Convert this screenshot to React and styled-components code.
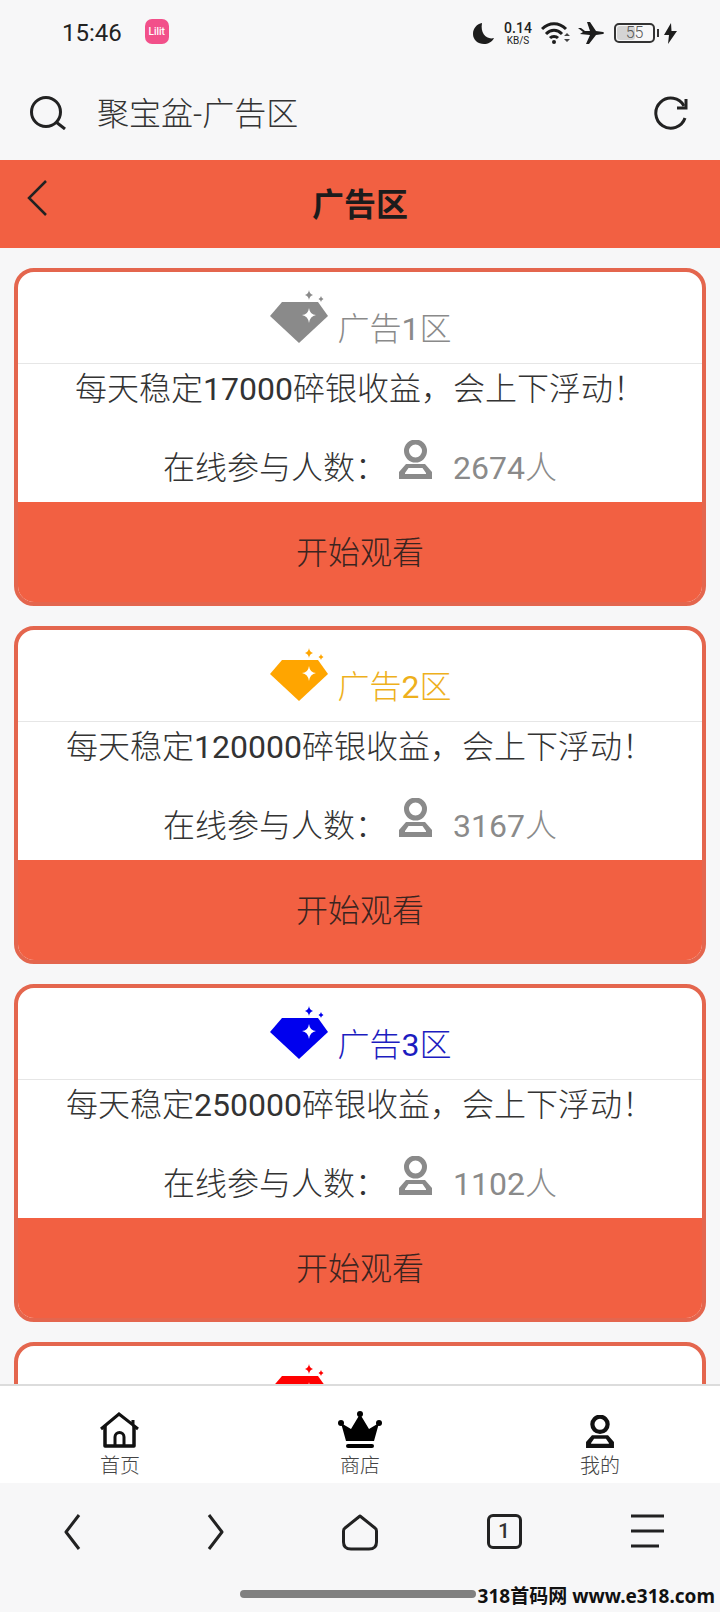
import React from "react";
import styled, { createGlobalStyle } from "styled-components";

const GlobalStyle = createGlobalStyle`
  html, body {
    margin: 0;
    padding: 0;
    background: #f7f7f8;
  }
  * {
    box-sizing: border-box;
  }
`;

const FONT = `Roboto, "Noto Sans CJK SC", sans-serif`;
const ORANGE = "#f26042";

// full-width punctuation, as the page uses it
const DESC_TAIL = "碎银收益\uFF0C会上下浮动\uFF01";
const ONLINE_LABEL = "在线参与人数\uFF1A";

const zones = [
  { id: 1, no: "1", color: "#8a8a8a", gem: "#8a8a8a", amount: "17000", count: "2674" },
  { id: 2, no: "2", color: "#eeb01c", gem: "#ffa500", amount: "120000", count: "3167" },
  { id: 3, no: "3", color: "#1c1cc0", gem: "#0000ee", amount: "250000", count: "1102" },
  // the fourth card is cut off by the tab bar, only its gem shows
  { id: 4, gem: "#ff0000" },
];

const Screen = styled.div`
  position: relative;
  width: 720px;
  height: 1612px;
  display: flex;
  flex-direction: column;
  overflow: hidden;
  background: #f7f7f8;
  font-family: ${FONT};
  font-weight: 300;
  color: #2b2b2b;
`;

const StatusBar = styled.div`
  height: 66px;
  flex: none;
  display: flex;
  align-items: center;
  padding: 0 43px 0 62px;
`;

const Clock = styled.span`
  font-size: 24px;
  font-weight: 400;
  color: #222;
`;

const AppBadge = styled.span`
  width: 24px;
  height: 25px;
  margin: 0 0 4px 23px;
  border-radius: 7px;
  background: #f2508a;
  color: #fff;
  font-size: 10px;
  font-weight: 500;
  line-height: 25px;
  text-align: center;
`;

const StatusIcons = styled.div`
  margin-left: auto;
  display: flex;
  align-items: center;
`;

const Speed = styled.div`
  width: 28px;
  margin: 0 9px 0 10px;
  display: flex;
  flex-direction: column;
  align-items: center;
  color: #222;
  font-size: 14px;
  font-weight: 500;
  line-height: 14px;
  span {
    font-size: 10px;
    line-height: 11px;
    font-weight: 400;
  }
`;

const PlaneSlot = styled.span`
  display: flex;
  margin-left: 7px;
`;

const Battery = styled.div`
  position: relative;
  width: 41px;
  height: 20px;
  margin: 0 9px;
  border: 2px solid #333;
  border-radius: 5px;
  font-size: 16px;
  line-height: 16px;
  color: #555;
  text-align: center;
  &::before {
    content: "";
    position: absolute;
    left: 1px;
    top: 1px;
    bottom: 1px;
    width: 18px;
    border-radius: 3px;
    background: #d4d4d4;
  }
  &::after {
    content: "";
    position: absolute;
    right: -6px;
    top: 4px;
    width: 2px;
    height: 8px;
    background: #333;
  }
  span {
    position: relative;
  }
`;

const AddressBar = styled.div`
  height: 94px;
  flex: none;
  display: flex;
  align-items: center;
  padding: 0 32px 0 30px;
`;

const AddressText = styled.div`
  margin: 0 0 4px 30px;
  flex: 1;
  font-size: 32px;
  color: #333;
`;

const Header = styled.div`
  position: relative;
  height: 88px;
  flex: none;
  background: ${ORANGE};
  display: flex;
  align-items: center;
  justify-content: center;
`;

const BackIcon = styled.svg`
  position: absolute;
  left: 27px;
  top: 20px;
`;

const Title = styled.h1`
  margin: 0 0 4px;
  font-size: 32px;
  font-weight: 700;
  color: #1c1c1c;
`;

const Main = styled.main`
  flex: 1;
  min-height: 0;
  overflow: hidden;
  padding: 20px 14px 0;
  display: flex;
  flex-direction: column;
  gap: 20px;
`;

const Card = styled.section`
  flex: none;
  height: 338px;
  border: 4px solid #e4664e;
  border-radius: 20px;
  background: #fff;
  overflow: hidden;
  display: flex;
  flex-direction: column;
`;

const CardHead = styled.div`
  height: 92px;
  flex: none;
  padding-bottom: 17px;
  display: flex;
  align-items: flex-end;
  justify-content: center;
  gap: 8px;
  border-bottom: 1px solid #e6e6e6;
`;

const CardName = styled.span`
  width: 113px;
  font-size: 32px;
  line-height: 34px;
  white-space: nowrap;
  color: ${(p) => p.$color};
`;

const Digits = styled.span`
  font-weight: 400;
`;

const Desc = styled.div`
  height: 46px;
  padding-top: 2px;
  font-size: 32px;
  line-height: 46px;
  text-align: center;
  white-space: nowrap;
  color: #333;
`;

const OnlineRow = styled.div`
  flex: 1;
  padding-bottom: 17px;
  display: flex;
  align-items: flex-end;
  justify-content: center;
  font-size: 32px;
  line-height: 34px;
  color: #333;
`;

const Count = styled.span`
  color: #8a8a8a;
  margin-left: 21px;
`;

const PersonWrap = styled.span`
  margin-left: 12px;
  display: flex;
  margin-bottom: 6px;
`;

const WatchButton = styled.div`
  height: 100px;
  flex: none;
  background: ${ORANGE};
  font-size: 32px;
  line-height: 102px;
  text-align: center;
  color: #3a2420;
`;

const TabBar = styled.nav`
  height: 99px;
  flex: none;
  background: #fff;
  border-top: 2px solid #dcdcdc;
  display: grid;
  grid-template-columns: repeat(3, 1fr);
`;

const Tab = styled.div`
  display: flex;
  flex-direction: column;
  align-items: center;
  padding-top: 25px;
  font-size: 20px;
  line-height: 28px;
  color: #444;
`;

const TabIcon = styled.span`
  height: 37px;
  margin-bottom: 4px;
  display: flex;
  align-items: flex-end;
`;

const BrowserBar = styled.div`
  height: 129px;
  flex: none;
  display: grid;
  grid-template-columns: repeat(5, 1fr);
  align-items: start;
  padding: 31px 0 0 0;
  justify-items: center;
`;

const TabCount = styled.div`
  width: 35px;
  height: 35px;
  border: 3px solid #222;
  border-radius: 6px;
  font-size: 21px;
  font-weight: 500;
  line-height: 29px;
  text-align: center;
  color: #333;
`;

const HomePill = styled.div`
  position: absolute;
  left: 240px;
  top: 1590px;
  width: 236px;
  height: 8px;
  border-radius: 4px;
  background: #808080;
`;

const Watermark = styled.div`
  position: absolute;
  right: 5px;
  top: 1584px;
  font-family: "Noto Sans", "Noto Sans CJK SC", sans-serif;
  font-size: 19px;
  line-height: 24px;
  font-weight: 700;
  color: #111;
  white-space: nowrap;
`;

function Gem({ color }) {
  return (
    <svg width="60" height="58" viewBox="0 0 60 58">
      <path d="M12 14H48L58 28L29 55L0 28Z" fill={color} />
      <path d="M39 20Q40 27 46 27Q40 28 39 35Q38 28 32 27Q38 27 39 20Z" fill="#fff" />
      <path d="M39 2Q39.500 6 43 7Q39.500 8 39 12Q38.500 8 35 7Q38.500 6 39 2Z" fill={color} />
      <path d="M51 8Q51.300 10 53.500 11Q51.300 12 51 14Q50.700 12 48.500 11Q50.700 10 51 8Z" fill={color} />
    </svg>
  );
}

function Person({ color = "#8a8a8a", width = 33, height = 39 }) {
  return (
    <svg width={width} height={height} viewBox="0 0 33 39">
      <circle cx="16.500" cy="11" r="9" fill="none" stroke={color} strokeWidth="5" />
      <path d="M7 24H26L33 32V39H0V32ZM9.500 28L6 33V34H27V33L23.500 28Z" fill={color} fillRule="evenodd" />
    </svg>
  );
}

function Moon() {
  return (
    <svg width="21" height="21" viewBox="0 0 21 21">
      <path d="M9 0C4 1 0 5 0 11C0 17 5 21 11 21C15 21 19 19 21 15C14 17 7 11 9 0Z" fill="#1d1d1d" />
    </svg>
  );
}

function Wifi() {
  return (
    <svg width="30" height="22" viewBox="0 0 30 22">
      <g fill="none" stroke="#1d1d1d" strokeWidth="3">
        <path d="M1 7C8 0 18 0 25 7" />
        <path d="M5 12C10 7 16 7 21 12" />
        <path d="M9 16C11 14 15 14 17 16" />
      </g>
      <circle cx="13" cy="20" r="2" fill="#1d1d1d" />
      <path d="M26 11L29 14H23ZM26 20L29 17H23Z" fill="#444" />
    </svg>
  );
}

function Plane() {
  return (
    <svg width="27" height="22" viewBox="0 0 27 22">
      <path d="M0 6H3L7 9H12L9 0H12L18 9L25 10Q27 11 25 12L18 13L11 22H8L12 13L2 12L5 10Z" fill="#1d1d1d" />
    </svg>
  );
}

function Bolt() {
  return (
    <svg width="13" height="21" viewBox="0 0 13 21">
      <path d="M7 0L0 12H5L4 21L13 8H7.500Z" fill="#1d1d1d" />
    </svg>
  );
}

function Search() {
  return (
    <svg width="37" height="34" viewBox="0 0 37 34">
      <circle cx="16" cy="16" r="14.500" fill="none" stroke="#222" strokeWidth="3" />
      <path d="M26 26L35 33" stroke="#222" strokeWidth="3" />
    </svg>
  );
}

function Refresh() {
  return (
    <svg width="34" height="34" viewBox="0 0 34 34">
      <path d="M31 22A15 15 0 1 1 30 10" fill="none" stroke="#222" strokeWidth="3" />
      <path d="M32 3V12H23" fill="none" stroke="#222" strokeWidth="3" />
    </svg>
  );
}

function TabHome() {
  return (
    <svg width="40" height="36" viewBox="0 0 40 36">
      <path d="M1 17L19 2L33 13V8M33 13L38 17" fill="none" stroke="#111" strokeWidth="3" />
      <path d="M5 14V34H34V14" fill="none" stroke="#111" strokeWidth="3.500" strokeLinejoin="round" />
      <path d="M15 34V25A4.500 4.500 0 0 1 24 25V34" fill="none" stroke="#111" strokeWidth="3" />
    </svg>
  );
}

function Crown() {
  return (
    <svg width="44" height="37" viewBox="0 0 44 37">
      <circle cx="22" cy="3" r="3" fill="#000" />
      <circle cx="3" cy="12" r="3" fill="#000" />
      <circle cx="41" cy="12" r="3" fill="#000" />
      <path d="M22 3L31 18L41 12L36 30H8L3 12L13 18Z" fill="#000" />
      <rect x="8" y="33" width="28" height="4" rx="2" fill="#000" />
    </svg>
  );
}

function NavChevron({ flip }) {
  return (
    <svg width="18" height="36" viewBox="0 0 18 36">
      <path d={flip ? "M2 1L15 18L2 35" : "M16 1L3 18L16 35"} fill="none" stroke="#222" strokeWidth="3" strokeLinejoin="round" />
    </svg>
  );
}

function NavHome() {
  return (
    <svg width="36" height="37" viewBox="0 0 36 37">
      <path d="M18 2L33 14Q34.500 15 34.500 17V28Q34.500 35 27 35H9Q1.500 35 1.500 28V17Q1.500 15 3 14Z" fill="none" stroke="#222" strokeWidth="3" strokeLinejoin="round" />
    </svg>
  );
}

function Menu() {
  return (
    <svg width="34" height="34" viewBox="0 0 34 34">
      <path d="M0 2H33M0 17H33M0 32H28" stroke="#222" strokeWidth="3" />
    </svg>
  );
}

function ZoneCard({ zone }) {
  return (
    <Card>
      <CardHead>
        <Gem color={zone.gem} />
        <CardName $color={zone.color}>
          {zone.no && (
            <>
              广告<Digits>{zone.no}</Digits>区
            </>
          )}
        </CardName>
      </CardHead>
      {zone.amount && (
        <>
          <Desc>
            每天稳定<Digits>{zone.amount}</Digits>
            {DESC_TAIL}
          </Desc>
          <OnlineRow>
            {ONLINE_LABEL}
            <PersonWrap>
              <Person />
            </PersonWrap>
            <Count>
              <Digits>{zone.count}</Digits>人
            </Count>
          </OnlineRow>
          <WatchButton>开始观看</WatchButton>
        </>
      )}
    </Card>
  );
}

export default function App() {
  return (
    <Screen>
      <GlobalStyle />
      <StatusBar>
        <Clock>15:46</Clock>
        <AppBadge>Lilit</AppBadge>
        <StatusIcons>
          <Moon />
          <Speed>
            0.14
            <span>KB/S</span>
          </Speed>
          <Wifi />
          <PlaneSlot>
            <Plane />
          </PlaneSlot>
          <Battery>
            <span>55</span>
          </Battery>
          <Bolt />
        </StatusIcons>
      </StatusBar>
      <AddressBar>
        <Search />
        <AddressText>聚宝盆-广告区</AddressText>
        <Refresh />
      </AddressBar>
      <Header>
        <BackIcon width="20" height="36" viewBox="0 0 20 36">
          <path d="M19 1L2 18L19 35" fill="none" stroke="#222" strokeWidth="2.500" />
        </BackIcon>
        <Title>广告区</Title>
      </Header>
      <Main>
        {zones.map((zone) => (
          <ZoneCard key={zone.id} zone={zone} />
        ))}
      </Main>
      <TabBar>
        <Tab>
          <TabIcon>
            <TabHome />
          </TabIcon>
          首页
        </Tab>
        <Tab>
          <TabIcon>
            <Crown />
          </TabIcon>
          商店
        </Tab>
        <Tab>
          <TabIcon>
            <Person color="#111" width={28} height={33} />
          </TabIcon>
          我的
        </Tab>
      </TabBar>
      <BrowserBar>
        <NavChevron />
        <NavChevron flip />
        <NavHome />
        <TabCount>1</TabCount>
        <Menu />
      </BrowserBar>
      <HomePill />
      <Watermark>318首码网 www.e318.com</Watermark>
    </Screen>
  );
}
